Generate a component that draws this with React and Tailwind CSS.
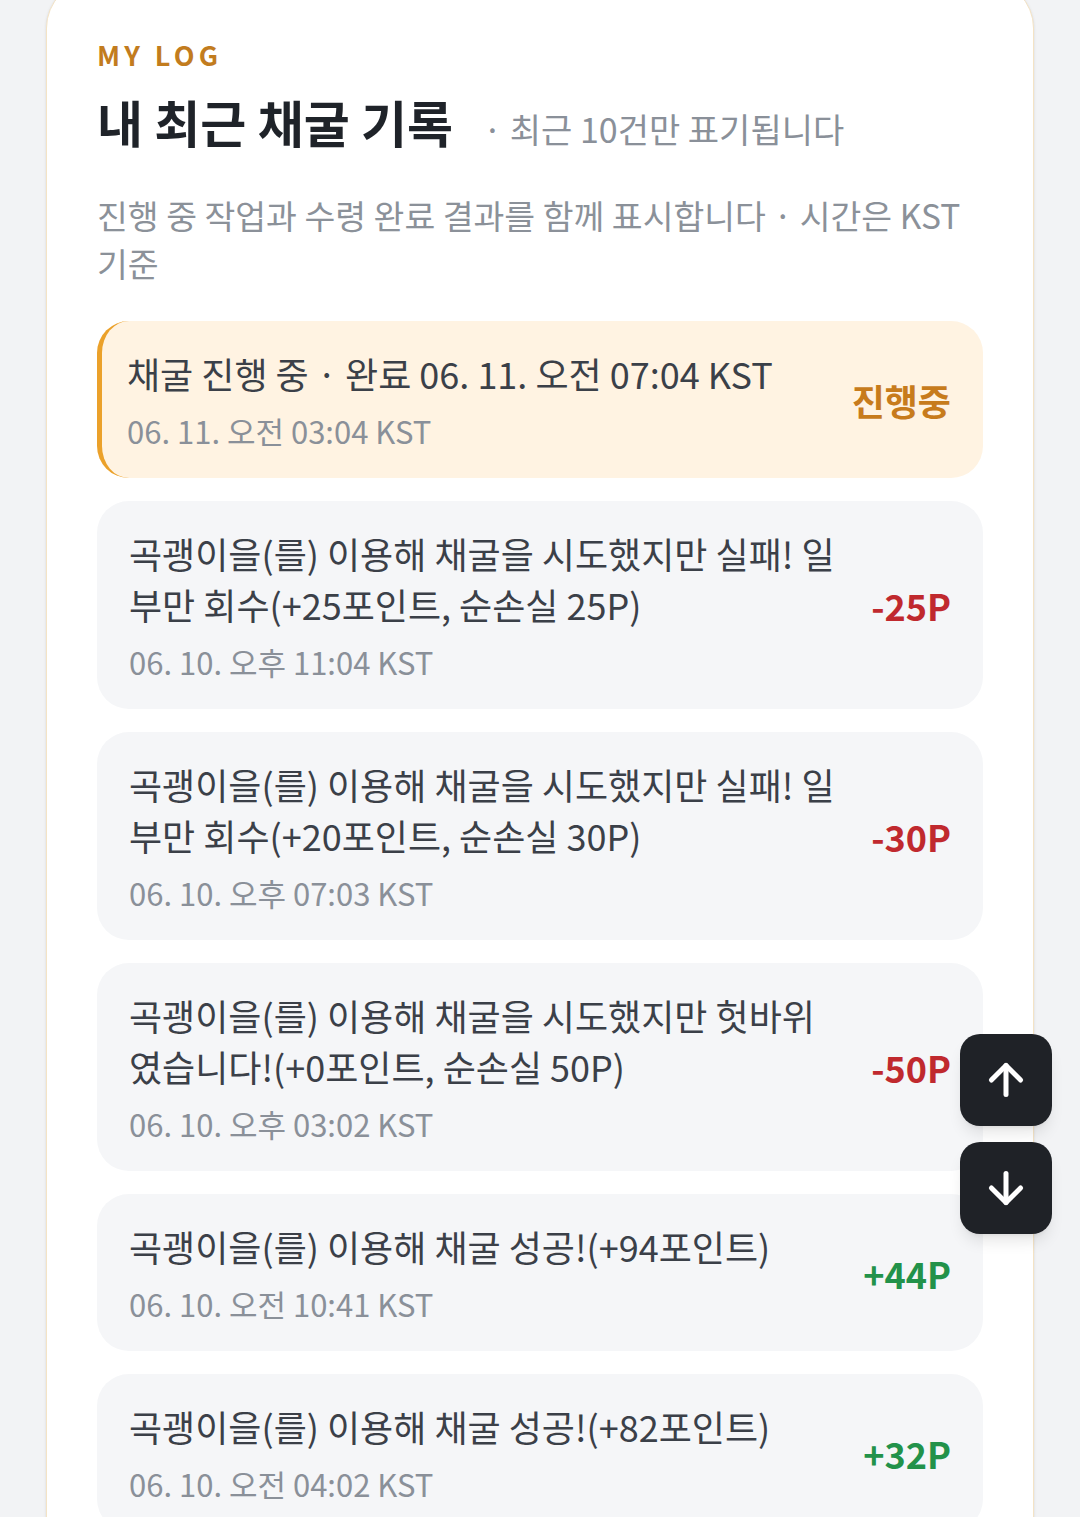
import React from "react";
import { ArrowUp, ArrowDown } from "lucide-react";

const FONT = { fontFamily: '"Noto Sans CJK KR", "Noto Sans", sans-serif' };

const logs = [
  {
    id: "running",
    text: "채굴 진행 중 · 완료 06. 11. 오전 07:04 KST",
    time: "06. 11. 오전 03:04 KST",
    amount: "진행중",
    type: "running",
  },
  {
    id: 1,
    text: "곡괭이을(를) 이용해 채굴을 시도했지만 실패! 일부만 회수(+25포인트, 순손실 25P)",
    time: "06. 10. 오후 11:04 KST",
    amount: "-25P",
    type: "loss",
  },
  {
    id: 2,
    text: "곡괭이을(를) 이용해 채굴을 시도했지만 실패! 일부만 회수(+20포인트, 순손실 30P)",
    time: "06. 10. 오후 07:03 KST",
    amount: "-30P",
    type: "loss",
  },
  {
    id: 3,
    text: "곡괭이을(를) 이용해 채굴을 시도했지만 헛바위였습니다!(+0포인트, 순손실 50P)",
    time: "06. 10. 오후 03:02 KST",
    amount: "-50P",
    type: "loss",
  },
  {
    id: 4,
    text: "곡괭이을(를) 이용해 채굴 성공!(+94포인트)",
    time: "06. 10. 오전 10:41 KST",
    amount: "+44P",
    type: "gain",
  },
  {
    id: 5,
    text: "곡괭이을(를) 이용해 채굴 성공!(+82포인트)",
    time: "06. 10. 오전 04:02 KST",
    amount: "+32P",
    type: "gain",
  },
];

const amountColor = {
  running: "text-[#c77b1c]",
  loss: "text-[#c0292e]",
  gain: "text-[#22924a]",
};

const LogItem = ({ log }) => {
  const running = log.type === "running";
  return (
    <li
      className={`flex items-center gap-[22px] rounded-[32px] pr-[32px] pt-[27px] pb-[27px] ${
        running
          ? "bg-[#fff3e2] border-l-[5px] border-[#eba12a] pl-[25px]"
          : "bg-[#f5f6f8] pl-[32px]"
      }`}
    >
      <div className="flex-1 min-w-0">
        <p className="text-[36px] leading-[51px] text-[#3b4048]">{log.text}</p>
        <p className="mt-[12px] text-[31px] leading-[40px] text-[#8a9099]">
          {log.time}
        </p>
      </div>
      <span
        className={`shrink-0 min-w-[86px] text-right text-[36px] font-bold ${amountColor[log.type]}`}
      >
        {log.amount}
      </span>
    </li>
  );
};

export default function App() {
  return (
    <div className="h-screen bg-[#f2f3f5] px-[46px] overflow-hidden" style={FONT}>
      <section className="-mt-[20px] bg-white border-[1.5px] border-[#f4e3c5] rounded-[48px] px-[50px] pt-[55px] pb-[50px] shadow-sm">
        <p className="text-[27px] leading-[38px] font-bold tracking-[0.16em] text-[#c27c1e]">
          MY LOG
        </p>

        <div className="mt-[17px] flex items-baseline gap-[30px]">
          <h1 className="text-[50px] leading-[60px] font-bold text-[#1f2329]">
            내 최근 채굴 기록
          </h1>
          <span className="text-[34px] text-[#8a9099]">· 최근 10건만 표기됩니다</span>
        </div>

        <p className="mt-[37px] text-[33.5px] leading-[48px] text-[#8b9199]">
          진행 중 작업과 수령 완료 결과를 함께 표시합니다 · 시간은 KST 기준
        </p>

        <ul className="mt-[34px] flex flex-col gap-[23px]">
          {logs.map((log) => (
            <LogItem key={log.id} log={log} />
          ))}
        </ul>
      </section>

      {/* scroll buttons */}
      <div className="fixed right-[28px] bottom-[283px] flex flex-col gap-[16px]">
        <button className="w-[92px] h-[92px] rounded-[20px] bg-[#1f2227] text-white flex items-center justify-center shadow-lg">
          <ArrowUp size={50} strokeWidth={2.4} />
        </button>
        <button className="w-[92px] h-[92px] rounded-[20px] bg-[#1f2227] text-white flex items-center justify-center shadow-lg">
          <ArrowDown size={50} strokeWidth={2.4} />
        </button>
      </div>
    </div>
  );
}
